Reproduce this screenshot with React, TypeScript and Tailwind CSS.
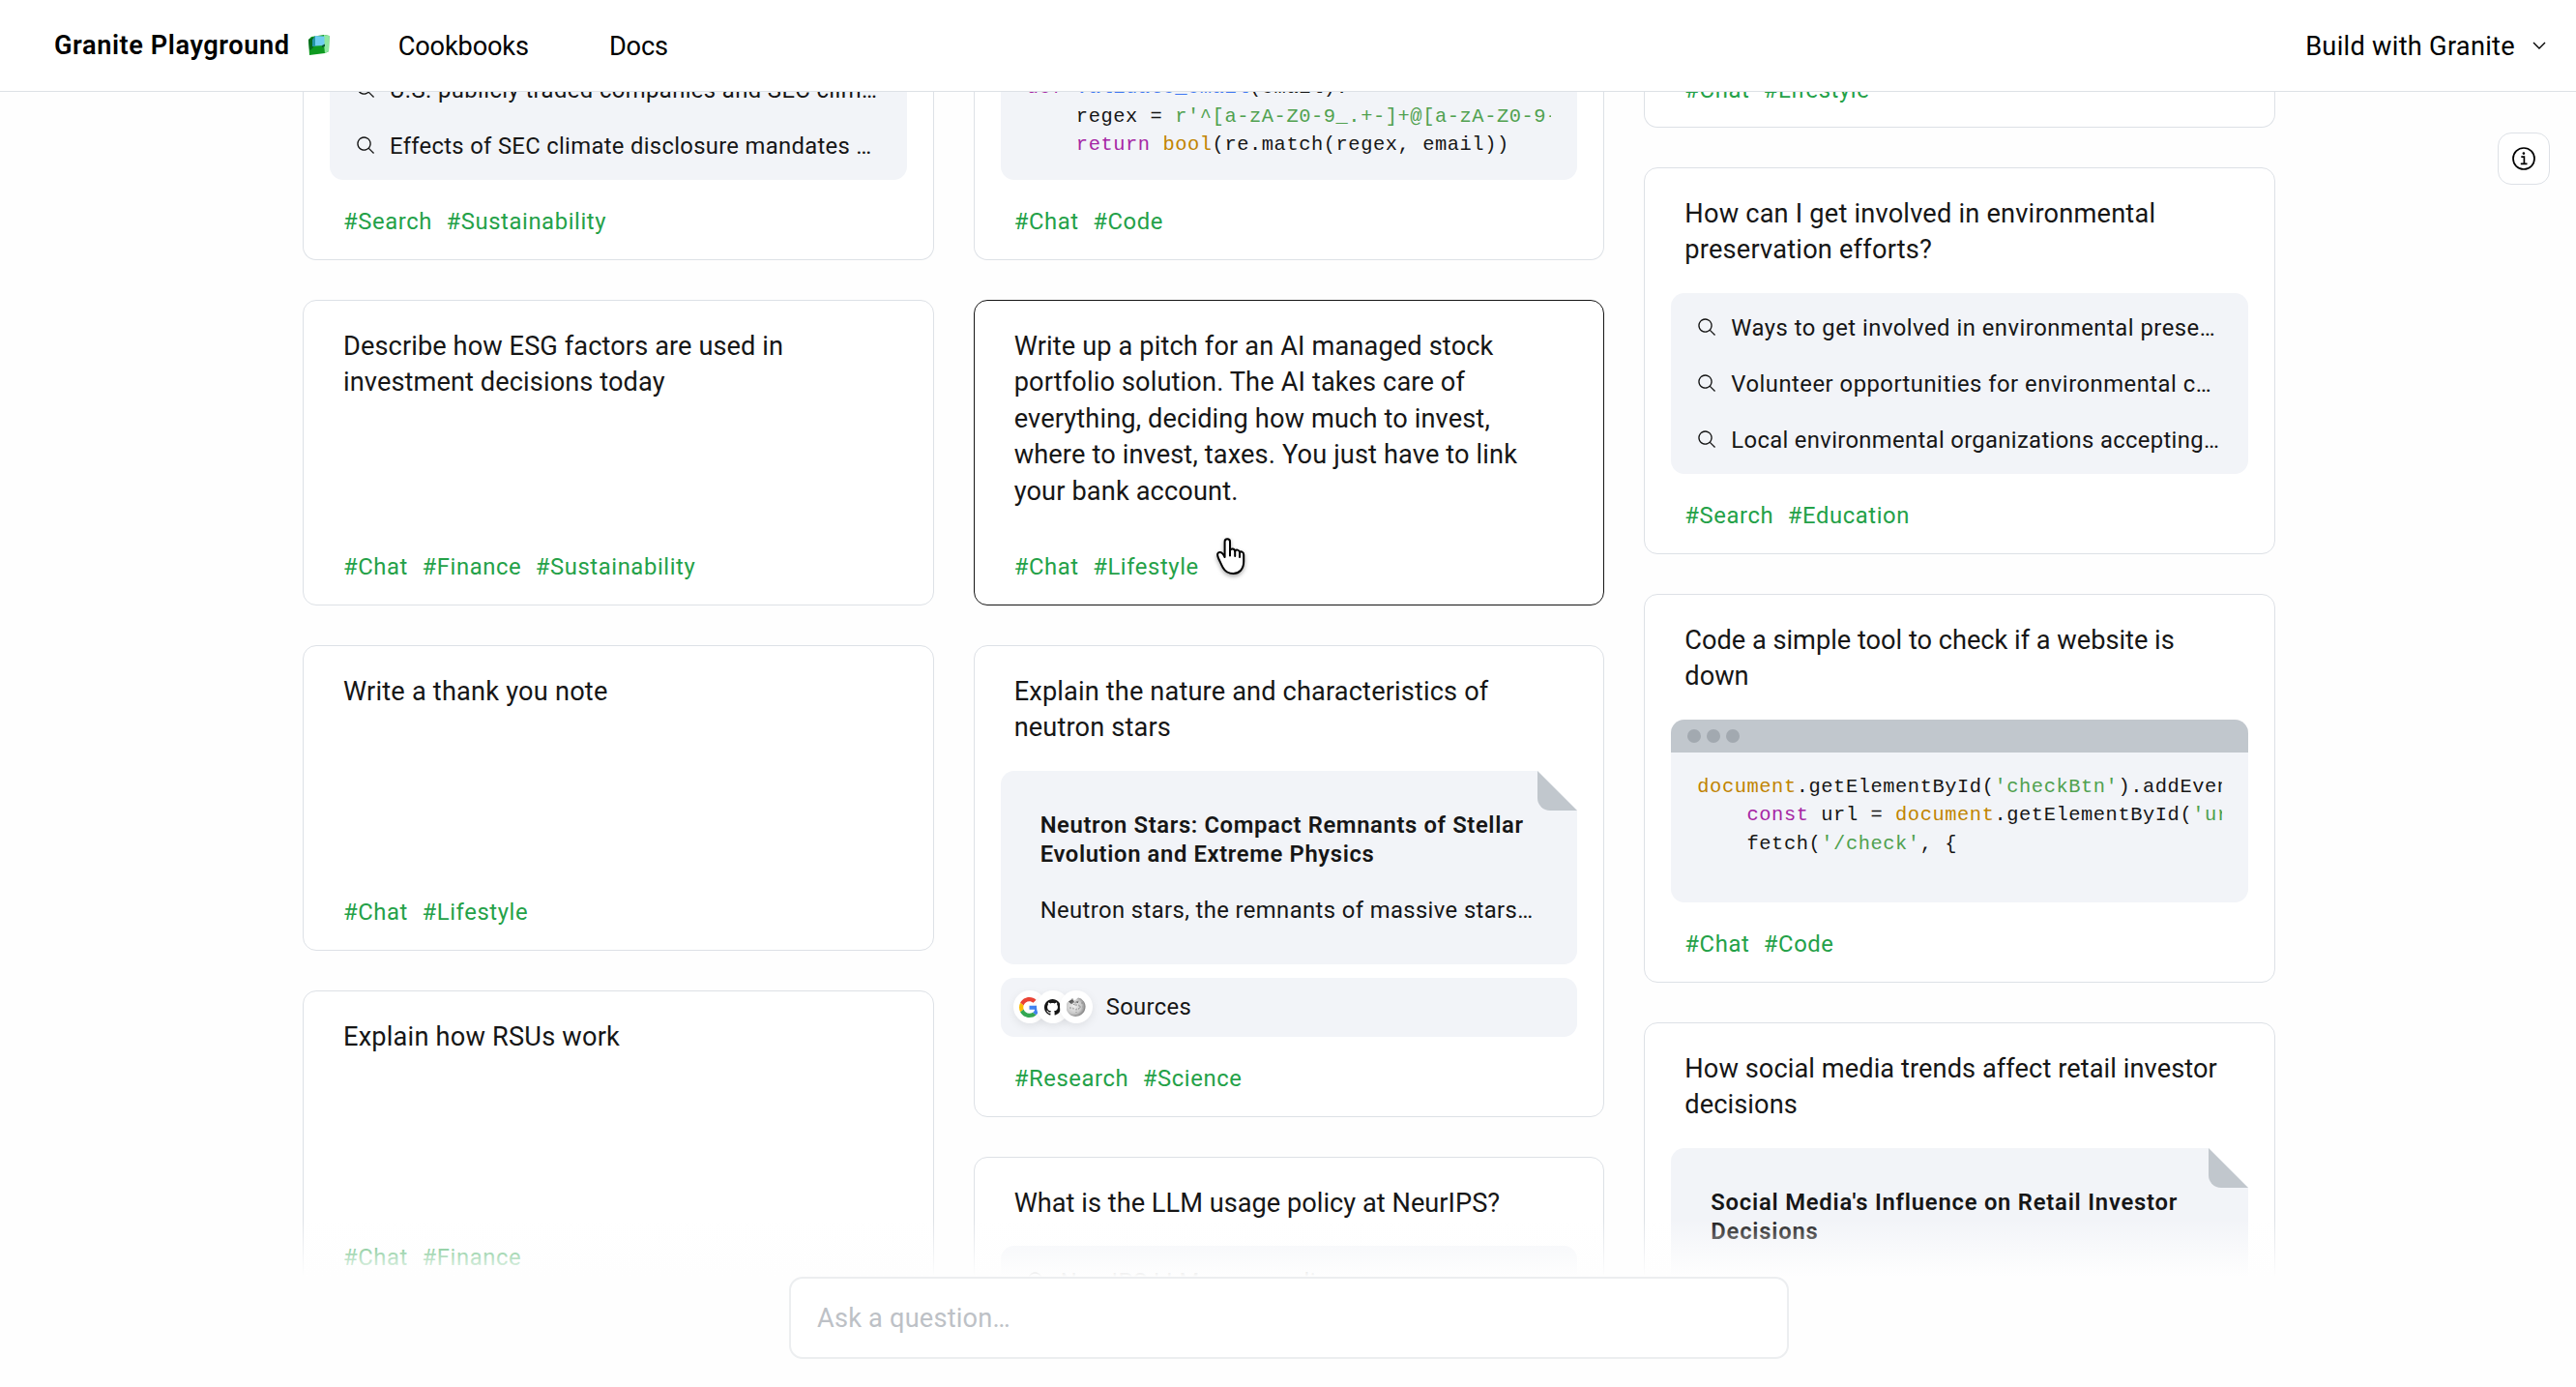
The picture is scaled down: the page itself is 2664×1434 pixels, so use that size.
import React from 'react';

type Tok = { t: string; c?: string };

const KEYWORD = 'text-[#a626a4]';
const STRING = 'text-[#50a14f]';
const BUILTIN = 'text-[#c18401]';
const TITLE = 'text-[#4078f2]';

const SearchIcon: React.FC = () => (
  <svg viewBox="0 0 32 32" className="h-[21px] w-[21px] shrink-0" fill="currentColor">
    <path d="M29,27.5859l-7.5521-7.5521a11.0177,11.0177,0,1,0-1.4141,1.4141L27.5859,29ZM4,13a9,9,0,1,1,9,9A9.01,9.01,0,0,1,4,13Z" />
  </svg>
);

const GraniteIcon: React.FC = () => (
  <svg viewBox="0 0 22 22" className="h-[22px] w-[22px]">
    <path d="M3 2 L16 0 L21.500 1 L21 17 L17 19 L1 21 L0 5 Z" fill="#0e9a20" />
    <path d="M16 0 L21.500 1 L21 17 L17 19 L16 10 Z" fill="#8fe8a0" />
    <path d="M0 5 L5 2.500 L5 13 L2 16 L1 15 Z" fill="#066b1c" />
    <path d="M4 5 L7 1 L7 12 L4 12 Z" fill="#2596a8" />
    <path d="M7 1 L16.500 1.500 L16.500 11 L7 11.500 Z" fill="#6fccf0" />
    <path d="M14 11 L17 9.500 L17 12 L14 13 Z" fill="#0a5c34" />
  </svg>
);

const InfoIcon: React.FC = () => (
  <svg viewBox="0 0 24 24" className="h-6 w-6" fill="none" stroke="#000" strokeWidth="1.700">
    <circle cx="12" cy="12" r="11" />
    <path d="M9.300 10.200 H12.400 V17.300 M8.800 17.300 H15.500" />
    <circle cx="11.900" cy="6.600" r="1.300" fill="#000" stroke="none" />
  </svg>
);

const HandCursor: React.FC = () => (
  <svg viewBox="0 0 30 39" className="h-[39px] w-[30px] drop-shadow-[0_2px_2px_rgba(0,0,0,0.35)]">
    <path
      d="M8.600 20 V4 C8.600 .3 14 .3 14 4 V13.500 C14.500 10.600 18.900 10.800 19.200 13.800 C20 11.800 23.800 12.200 24 15.200 C25.200 13.700 28.200 14.300 28.200 17.500 V24.500 C28.200 32.500 23.500 37 17.500 37 C12 37 9 34.800 6.800 31 C5 27.800 3.800 24.800 2 21 C.3 17 1.300 15.200 3.200 15 C6 14.800 7.500 17.500 8.600 20 Z"
      fill="#fff"
      stroke="#000"
      strokeWidth="2"
      strokeLinejoin="round"
    />
    <path d="M14 13 V18.500 M19.200 14 V19 M24 15.500 V20" fill="none" stroke="#000" strokeWidth="2" strokeLinecap="round" />
  </svg>
);

const GoogleIcon: React.FC = () => (
  <svg viewBox="0 0 48 48" className="h-[21px] w-[21px]">
    <path fill="#EA4335" d="M24 9.500c3.540 0 6.710 1.220 9.210 3.600l6.850-6.850C35.900 2.380 30.470 0 24 0 14.620 0 6.510 5.380 2.560 13.220l7.980 6.190C12.430 13.720 17.740 9.500 24 9.500z" />
    <path fill="#4285F4" d="M46.980 24.550c0-1.570-.15-3.090-.38-4.550H24v9.020h12.940c-.58 2.960-2.260 5.480-4.780 7.180l7.730 6c4.510-4.180 7.090-10.360 7.090-17.650z" />
    <path fill="#FBBC05" d="M10.530 28.590c-.48-1.450-.76-2.990-.76-4.590s.27-3.140.76-4.590l-7.980-6.190C.92 16.460 0 20.120 0 24c0 3.880.92 7.540 2.560 10.780l7.970-6.190z" />
    <path fill="#34A853" d="M24 48c6.480 0 11.930-2.130 15.890-5.810l-7.730-6c-2.150 1.450-4.920 2.300-8.160 2.300-6.260 0-11.570-4.220-13.470-9.910l-7.980 6.190C6.510 42.620 14.620 48 24 48z" />
  </svg>
);

const GithubIcon: React.FC = () => (
  <svg viewBox="0 0 16 16" className="h-[17px] w-[17px]" fill="#161616">
    <path d="M8 0C3.580 0 0 3.580 0 8c0 3.540 2.290 6.530 5.470 7.590.4.070.55-.17.55-.38 0-.19-.01-.82-.01-1.490-2.010.37-2.530-.49-2.690-.94-.09-.23-.48-.94-.82-1.130-.28-.15-.68-.52-.01-.53.63-.01 1.080.58 1.230.82.72 1.210 1.870.87 2.330.66.07-.52.28-.87.51-1.070-1.780-.2-3.640-.89-3.640-3.950 0-.87.31-1.590.82-2.150-.08-.2-.36-1.020.08-2.120 0 0 .67-.21 2.200.82.64-.18 1.320-.27 2-.27s1.360.09 2 .27c1.530-1.040 2.200-.82 2.200-.82.44 1.100.16 1.920.08 2.120.51.56.82 1.270.82 2.150 0 3.070-1.870 3.750-3.650 3.950.29.25.54.73.54 1.480 0 1.070-.01 1.930-.01 2.200 0 .21.15.46.55.38A8.010 8.010 0 0 0 16 8c0-4.420-3.580-8-8-8z" />
  </svg>
);

const WikipediaIcon: React.FC = () => (
  <svg viewBox="0 0 20 20" className="h-5 w-5">
    <defs>
      <radialGradient id="globe" cx="0.4" cy="0.45" r="0.65">
        <stop offset="0" stopColor="#f0f0f0" />
        <stop offset="0.6" stopColor="#cacaca" />
        <stop offset="1" stopColor="#6e6e6e" />
      </radialGradient>
    </defs>
    <path d="M1 5 L5 2 L9 3 L12 .5 L15 1.500 L18 4.500 A10 10 0 0 1 10.500 19.800 A9.800 9.800 0 0 1 1 5 Z" fill="url(#globe)" />
    <path d="M2 4.500 L6 2 L8 5 L5 7 Z M9 5 l3 -1 l0 2 z" fill="#555" />
    <path
      d="M6 1 V7 L9 8 V5 L13 4 M3 11 h4 v3 M9 8 h4 v4 h-3 v4 M13 10 h4 M16 5 v3"
      fill="none"
      stroke="#8d8d8d"
      strokeWidth="0.9"
      strokeDasharray="2 1.500"
    />
  </svg>
);

const Tags: React.FC<{ tags: string[] }> = ({ tags }) => (
  <div className="flex gap-[14.5px] px-[14px] text-[23.8px] leading-[31px] tracking-[0.6px] text-[#24a148]">
    {tags.map((t) => (
      <span key={t}>#{t}</span>
    ))}
  </div>
);

interface CardProps {
  title?: string[];
  tags?: string[];
  className?: string;
  children?: React.ReactNode;
}

const Card: React.FC<CardProps> = ({ title, tags, className = '', children }) => (
  <div className={`flex shrink-0 flex-col overflow-hidden border bg-white px-[27px] ${className}`}>
    {title && (
      <h3 className="mt-[29px] whitespace-nowrap px-[14px] text-[27.2px] leading-[37.4px]">
        {title.map((line) => (
          <span key={line} className="block">{line}</span>
        ))}
      </h3>
    )}
    {children}
    {tags && (
      <div className="mt-auto pb-[23px]">
        <Tags tags={tags} />
      </div>
    )}
  </div>
);

const SearchRow: React.FC<{ text: string; className?: string }> = ({ text, className = 'tracking-[0.5px]' }) => (
  <div className="flex h-[58px] items-center gap-[14px] pl-[27px]">
    <SearchIcon />
    <span className={`whitespace-nowrap pt-[2px] text-[23.8px] leading-[31px] ${className}`}>{text}</span>
  </div>
);

const CodeLines: React.FC<{ lines: Tok[][] }> = ({ lines }) => (
  <pre className="mx-[27px] overflow-hidden font-['Liberation_Mono',monospace] text-[20.4px] leading-[29.5px] tracking-[0.56px]">
    {lines.map((line, i) => (
      <div key={i}>
        {line.map((tok, j) => (
          <span key={j} className={tok.c}>{tok.t}</span>
        ))}
      </div>
    ))}
  </pre>
);

interface DocProps {
  heading: string[];
  body: string;
  headingClass: string;
}

const Doc: React.FC<DocProps> = ({ heading, body, headingClass }) => (
  <div className="relative mt-[25px] h-[200px] shrink-0 whitespace-nowrap rounded-[14px] rounded-tr-none bg-[#f2f4f8] px-[41px] pt-[41px] text-[23.8px] leading-[30.5px]">
    <svg viewBox="0 0 41 41" className="absolute top-0 right-0 h-[41px] w-[41px]">
      <path d="M0 0 H41 V41 Z" fill="#fff" />
      <path d="M0 0 V28 A13 13 0 0 0 13 41 H41 Z" fill="#c1c7cd" />
    </svg>
    <div className={`font-semibold ${headingClass}`}>
      {heading.map((line) => (
        <div key={line}>{line}</div>
      ))}
    </div>
    <div className="mt-[27px] tracking-[0.4px]">{body}</div>
  </div>
);

const validateCode: Tok[][] = [
  [{ t: 'def ', c: KEYWORD }, { t: 'validate_email', c: TITLE }, { t: '(email):' }],
  [{ t: '    regex = ' }, { t: "r'^[a-zA-Z0-9_.+-]+@[a-zA-Z0-9-]+", c: STRING }],
  [{ t: '    ' }, { t: 'return', c: KEYWORD }, { t: ' ' }, { t: 'bool', c: BUILTIN }, { t: '(re.match(regex, email))' }],
];

const checkCode: Tok[][] = [
  [{ t: 'document', c: BUILTIN }, { t: '.getElementById(' }, { t: "'checkBtn'", c: STRING }, { t: ').addEventListener(' }],
  [
    { t: '    ' },
    { t: 'const', c: KEYWORD },
    { t: ' url = ' },
    { t: 'document', c: BUILTIN },
    { t: '.getElementById(' },
    { t: "'url'", c: STRING },
    { t: ').value;' },
  ],
  [{ t: '    fetch(' }, { t: "'/check'", c: STRING }, { t: ', {' }],
];

const cardBase = 'rounded-[14px] border-[#dde1e6]';
const cardCut = 'justify-end rounded-b-[14px] border-t-0 border-[#dde1e6]';

const App: React.FC = () => {
  return (
    <div className="relative flex h-[1434px] w-[2664px] flex-col overflow-hidden bg-[#fefefe] font-[Roboto,sans-serif] text-[#161616]">
      <header className="flex h-[95px] shrink-0 items-center border-b border-[#dde1e6] bg-white pr-[31px] pl-[56px] text-[27.2px] text-black">
        <span className="font-semibold tracking-[0.57px]">Granite Playground</span>
        <span className="ml-[19px]">
          <GraniteIcon />
        </span>
        <nav className="ml-[71px] flex gap-[83px] pt-[2px] tracking-[-0.15px]">
          <a>Cookbooks</a>
          <a>Docs</a>
        </nav>
        <button className="ml-auto flex items-center gap-[18px] tracking-[0.28px]">
          <span className="pt-[2px]">Build with Granite</span>
          <svg viewBox="0 0 14 8" className="h-2 w-[14px]" fill="none" stroke="#000" strokeWidth="1.400">
            <path d="M1 1 L7 7 L13 1" />
          </svg>
        </button>
      </header>

      <main className="mx-auto grid min-h-0 w-[2042px] flex-1 grid-cols-3 gap-[41px] overflow-hidden pl-[2px]">
        <div className="flex min-w-0 flex-col gap-[41px]">
          <Card className={`h-[174px] ${cardCut}`} tags={['Search', 'Sustainability']}>
            <div className="-mt-[32px] shrink-0 rounded-b-[14px] bg-[#f2f4f8] pb-[7px]">
              <SearchRow text="U.S. publicly traded companies and SEC clim…" className="tracking-[0.4px]" />
              <SearchRow text="Effects of SEC climate disclosure mandates …" className="tracking-[0.32px]" />
            </div>
          </Card>
          <Card
            className={`h-[316px] tracking-[0.09px] ${cardBase}`}
            title={['Describe how ESG factors are used in', 'investment decisions today']}
            tags={['Chat', 'Finance', 'Sustainability']}
          />
          <Card
            className={`h-[316px] tracking-[0.2px] ${cardBase}`}
            title={['Write a thank you note']}
            tags={['Chat', 'Lifestyle']}
          />
          <Card
            className={`h-[316px] tracking-[0.2px] ${cardBase}`}
            title={['Explain how RSUs work']}
            tags={['Chat', 'Finance']}
          />
        </div>

        <div className="flex min-w-0 flex-col gap-[41px]">
          <Card className={`h-[174px] ${cardCut}`} tags={['Chat', 'Code']}>
            <div className="-mt-[19px] h-[110px] shrink-0 rounded-b-[14px] bg-[#f2f4f8]">
              <CodeLines lines={validateCode} />
            </div>
          </Card>
          <Card
            className="h-[316px] rounded-[14px] border-[#161616] tracking-[0.13px]"
            title={[
              'Write up a pitch for an AI managed stock',
              'portfolio solution. The AI takes care of',
              'everything, deciding how much to invest,',
              'where to invest, taxes. You just have to link',
              'your bank account.',
            ]}
            tags={['Chat', 'Lifestyle']}
          />
          <Card
            className={`h-[488px] tracking-[0.14px] ${cardBase}`}
            title={['Explain the nature and characteristics of', 'neutron stars']}
            tags={['Research', 'Science']}
          >
            <Doc
              heading={['Neutron Stars: Compact Remnants of Stellar', 'Evolution and Extreme Physics']}
              headingClass="tracking-[0.63px]"
              body="Neutron stars, the remnants of massive stars…"
            />
            <div className="mt-[14px] flex h-[61px] shrink-0 items-center rounded-[14px] bg-[#f2f4f8] pl-[13px]">
              <div className="flex -space-x-[10px]">
                <span className="flex h-[34px] w-[34px] items-center justify-center rounded-full bg-white shadow-[0_3px_10px_rgba(0,0,0,0.08)]">
                  <GoogleIcon />
                </span>
                <span className="flex h-[34px] w-[34px] items-center justify-center rounded-full bg-white shadow-[0_3px_10px_rgba(0,0,0,0.08)]">
                  <GithubIcon />
                </span>
                <span className="flex h-[34px] w-[34px] items-center justify-center rounded-full bg-white shadow-[0_3px_10px_rgba(0,0,0,0.08)]">
                  <WikipediaIcon />
                </span>
              </div>
              <span className="ml-[14px] pt-[2px] text-[23.8px] tracking-[0.35px]">Sources</span>
            </div>
          </Card>
          <Card
            className={`h-[400px] tracking-[0.02px] ${cardBase}`}
            title={['What is the LLM usage policy at NeurIPS?']}
          >
            <div className="mt-[25px] h-[187px] shrink-0 rounded-[14px] bg-[#f2f4f8] pt-[7px]">
              <SearchRow text="NeurIPS LLM usage policy" />
            </div>
          </Card>
        </div>

        <div className="flex min-w-0 flex-col gap-[41px]">
          <Card className={`h-[37px] ${cardCut}`}>
            <div className="pb-[22px]">
              <Tags tags={['Chat', 'Lifestyle']} />
            </div>
          </Card>
          <Card
            className={`h-[400px] tracking-[0.2px] ${cardBase}`}
            title={['How can I get involved in environmental', 'preservation efforts?']}
            tags={['Search', 'Education']}
          >
            <div className="mt-[25px] h-[187px] shrink-0 rounded-[14px] bg-[#f2f4f8] pt-[7px]">
              <SearchRow text="Ways to get involved in environmental prese…" />
              <SearchRow text="Volunteer opportunities for environmental c…" />
              <SearchRow text="Local environmental organizations accepting…" className="tracking-[0.34px]" />
            </div>
          </Card>
          <Card
            className={`h-[402px] tracking-[-0.01px] ${cardBase}`}
            title={['Code a simple tool to check if a website is', 'down']}
            tags={['Chat', 'Code']}
          >
            <div className="mt-[25px] h-[189px] shrink-0 overflow-hidden rounded-[14px] bg-[#f2f4f8]">
              <div className="mb-[21px] flex h-[34px] items-center gap-[6px] bg-[#c1c7cd] pl-[17px]">
                <span className="h-[14px] w-[14px] rounded-full bg-[#a2a9b0]" />
                <span className="h-[14px] w-[14px] rounded-full bg-[#a2a9b0]" />
                <span className="h-[14px] w-[14px] rounded-full bg-[#a2a9b0]" />
              </div>
              <CodeLines lines={checkCode} />
            </div>
          </Card>
          <Card
            className={`h-[488px] tracking-[0.08px] ${cardBase}`}
            title={['How social media trends affect retail investor', 'decisions']}
          >
            <Doc
              heading={["Social Media's Influence on Retail Investor", 'Decisions']}
              headingClass="tracking-[0.77px]"
              body="Social media has become…"
            />
          </Card>
        </div>
      </main>

      {/* fade over the bottom of the card grid */}
      <div className="absolute inset-x-0 bottom-0 flex flex-col">
        <div className="h-[60px] bg-linear-to-b from-[#fefefe]/0 to-[#fefefe]" />
        <div className="h-[114px] bg-[#fefefe]" />
      </div>
      <div className="absolute top-[1320px] left-[816px] flex h-[85px] w-[1034px] items-center rounded-[14px] border-2 border-[#eceef0] bg-white pt-[1px] pl-[27px] text-[27.2px] tracking-[0.2px] text-[#bdc1c6]">
        Ask a question…
      </div>
      <button className="absolute top-[137px] left-[2583px] flex h-[54px] w-[54px] items-center justify-center rounded-[14px] border border-[#dde1e6] bg-white">
        <InfoIcon />
      </button>
      <div className="absolute top-[556px] left-[1258px]">
        <HandCursor />
      </div>
    </div>
  );
};

export default App;
